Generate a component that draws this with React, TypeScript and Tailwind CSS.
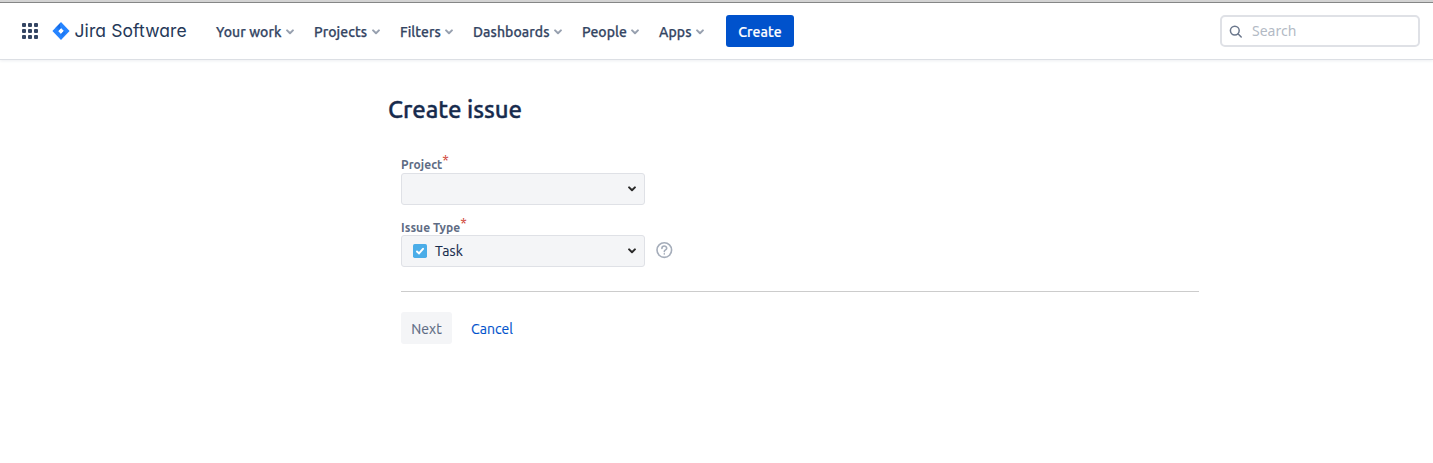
import React from 'react';

const navItems = [
  { label: 'Your work', size: 'w-[66px]' },
  { label: 'Projects', size: 'w-[54px]' },
  { label: 'Filters', size: 'w-[41px]' },
  { label: 'Dashboards', size: 'w-[77px]' },
  { label: 'People', size: 'w-[45px]' },
  { label: 'Apps', size: 'w-[33px]' },
];

function Chevron({ className }: { className: string }) {
  return (
    <svg viewBox="0 0 8 6" className={`h-[6px] w-[8px] shrink-0 ${className}`} fill="none" stroke="currentColor" strokeWidth="2" strokeLinecap="round" strokeLinejoin="round">
      <path d="M1.1 1.4 4 4.2 6.9 1.4" />
    </svg>
  );
}

function AppGrid() {
  return (
    <div className="mt-5 ml-[22px] grid h-4 w-4 grid-cols-3 gap-[2px] self-start">
      {Array.from({ length: 9 }, (_, i) => (
        <span key={i} className="h-[4px] w-[4px] rounded-[1px] bg-[#344563]" />
      ))}
    </div>
  );
}

function JiraMark() {
  return (
    <svg viewBox="0 0 18 18" className="h-[18px] w-[18px] shrink-0">
      <defs>
        <linearGradient id="markTop" x1="9" y1="4" x2="5" y2="8" gradientUnits="userSpaceOnUse">
          <stop stopColor="#0f5fd9" />
          <stop offset="1" stopColor="#2684ff" />
        </linearGradient>
      </defs>
      <path fill="#2684ff" fillRule="evenodd" d="M9 0 17.6 9 9 18 .4 9ZM9 6.1 6.1 9 9 11.9 11.9 9Z" />
      <path fill="url(#markTop)" d="M9 6.1 6.2 8.9 3.4 6.1 8.2 1.2Q7 4.2 9 6.1Z" />
      <path fill="#1e78f2" d="M9 11.9 11.8 9.1 13.6 11 9.5 15.3Q10.4 13.2 9 11.9Z" />
    </svg>
  );
}

function Label({ text, className }: { text: string; className?: string }) {
  return (
    <div className={`flex h-[17px] items-start whitespace-nowrap ${className ?? ''}`}>
      <span className="text-[12px] leading-[17px] font-semibold tracking-[0.05px] text-[#5e6c84]">{text}</span>
      <span className="-mt-[4px] text-[14px] leading-[17px] text-[#d04437]">*</span>
    </div>
  );
}

function Select({ children }: { children?: React.ReactNode }) {
  return (
    <button className="flex h-8 w-[244px] items-center rounded-[3px] border border-[#dfe1e6] bg-[#f4f5f7] pr-2 pl-[11px] text-[#172b4d]">
      {children}
      <Chevron className="ml-auto text-[#292929]" />
    </button>
  );
}

export default function App() {
  return (
    <div className="h-[463px] w-[1433px] overflow-hidden bg-white font-['Ubuntu','Noto_Sans',sans-serif] text-[14px] text-[#172b4d]">
      <div className="h-[3px] border-b border-[#808080] bg-[#d3d3d3]" />
      <header className="flex h-[56px] items-center shadow-[0_1px_0_#dcdfe4,0_2px_3px_#edeff2]">
        <AppGrid />
        <div className="ml-[14px] flex items-center">
          <JiraMark />
          <span className="ml-[4.5px] w-[112.5px] font-['Inter','Lato',sans-serif] text-[17.5px] leading-5 tracking-[0.1px] whitespace-nowrap text-[#253858] [font-feature-settings:'cv11']">Jira Software</span>
        </div>
        <nav className="ml-[29px] flex items-center gap-5 pt-[2px]">
          {navItems.map((item) => (
            <button key={item.label} className="flex items-center gap-1">
              <span className={`text-left leading-5 font-medium tracking-[0.08px] whitespace-nowrap text-[#344563] [-webkit-text-stroke:0.25px_#344563] ${item.size}`}>{item.label}</span>
              <Chevron className="text-[#97a0af]" />
            </button>
          ))}
        </nav>
        <button className="ml-[22px] flex h-8 w-[68px] items-center justify-center rounded-[3px] bg-[#0052cc] pt-[2px] leading-5 font-medium tracking-[0.08px] text-white [-webkit-text-stroke:0.2px_#fff]">Create</button>
        <div className="mr-[13px] ml-auto flex h-8 w-[200px] items-center rounded-[5px] border-2 border-[#dfe1e6] pl-[7px]">
          <svg viewBox="0 0 13 13" className="h-[13px] w-[13px]" fill="none" stroke="#6b778c" strokeWidth="1.5" strokeLinecap="round">
            <circle cx="5.8" cy="5.6" r="4.4" />
            <path d="m9.2 9 3 3" />
          </svg>
          <span className="ml-[10px] font-['Noto_Sans',sans-serif] leading-5 text-[#b3bac5]">Search</span>
        </div>
      </header>
      <main className="ml-[388px] pt-[35px]">
        <h1 className="h-8 text-[24px] leading-8 font-medium tracking-[-0.03px] whitespace-nowrap [-webkit-text-stroke:0.35px_#172b4d]">Create issue</h1>
        <form className="ml-[13px] w-[798px] pt-[30px]">
          <Label text="Project" />
          <Select />
          <div className="h-[13px]" />
          <Label text="Issue Type" className="relative top-px" />
          <div className="flex items-center">
            <Select>
              <svg viewBox="0 0 14 14" className="h-[14px] w-[14px]">
                <rect width="14" height="14" rx="1.7" fill="#4bade8" />
                <path d="M4 7.5 6 9.4 10 4.8" fill="none" stroke="#fff" strokeWidth="2" strokeLinecap="round" />
              </svg>
              <span className="ml-2 leading-5 tracking-[0.08px] [-webkit-text-stroke:0.15px_#172b4d]">Task</span>
            </Select>
            <svg viewBox="0 0 17 17" className="-mt-[2px] ml-[11px] h-[17px] w-[17px]" fill="none" stroke="#a5adba" strokeWidth="1.6" strokeLinecap="round">
              <circle cx="8.3" cy="8.1" r="7.3" />
              <path d="M5.9 6.4C5.9 3.2 10.7 3.3 10.7 6.2C10.7 8 8.3 7.7 8.3 9.6M8.3 11.9v.1" />
            </svg>
          </div>
          <div className="mt-[24px] border-t border-[#cccccc]" />
          <div className="mt-5 flex h-8 items-center">
            <button className="h-8 w-[51px] rounded-[3px] bg-[#f4f5f7] pt-[2px] text-[#5e6c84] [-webkit-text-stroke:0.15px_#5e6c84]">Next</button>
            <a className="ml-[19px] pt-[2px] tracking-[0.06px] text-[#0052cc] [-webkit-text-stroke:0.15px_#0052cc]">Cancel</a>
          </div>
        </form>
      </main>
    </div>
  );
}
